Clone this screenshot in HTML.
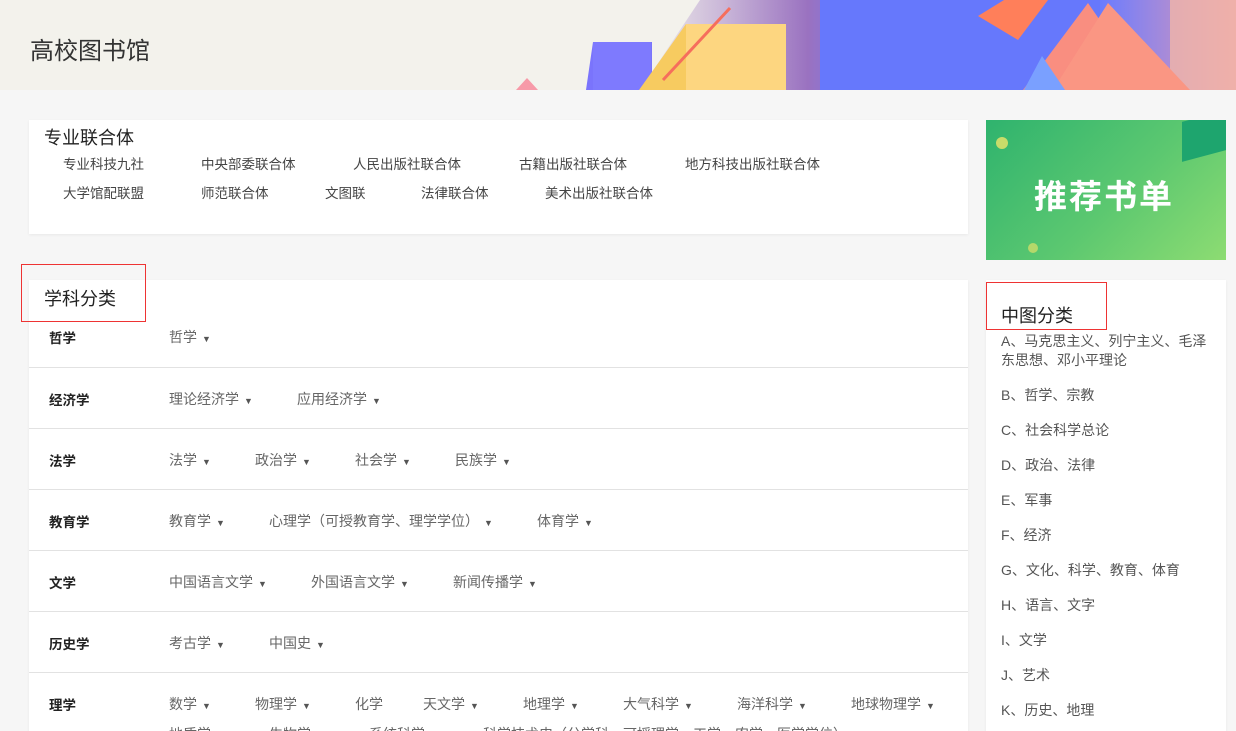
<!DOCTYPE html><html><head><meta charset="utf-8"><style>
*{margin:0;padding:0;box-sizing:border-box}
html,body{width:1236px;height:731px;overflow:hidden}
body{background:#f6f6f6;font-family:"Liberation Sans","Noto Sans CJK SC",sans-serif;position:relative;color:#333}
.hdr{position:absolute;left:0;top:0;width:1236px;height:90px;background:#f3f2ec;overflow:hidden}
.hdr h1{position:absolute;left:30px;top:31px;font-size:24px;font-weight:normal;color:#333}
.ab{position:absolute}
.card{position:absolute;background:#fff;box-shadow:0 1px 3px rgba(0,0,0,.06)}
.lnk{position:absolute;font-size:13.5px;color:#444}
.row{position:absolute;left:0;width:939px;height:61px;border-top:1px solid #e2e2e2}
.row b{position:absolute;left:20px;top:21px;font-size:13.5px;color:#222;font-weight:bold}
.row span{position:absolute;top:21px;font-size:14px;color:#666;white-space:nowrap}
.tri{font-size:9px;color:#555;margin-left:5px;font-style:normal}
.red{position:absolute;border:1px solid #e33}
.cl{position:absolute;left:15px;font-size:14px;color:#555;line-height:19px;width:215px}
</style></head><body>
<div class="hdr">
<svg class="ab" style="left:0;top:0" width="1236" height="90">
<defs>
<linearGradient id="g1" x1="0" x2="1"><stop offset="0" stop-color="#f3f2ec"/><stop offset=".35" stop-color="#c9b6d8"/><stop offset=".7" stop-color="#9a72c0"/><stop offset="1" stop-color="#6a7aff"/></linearGradient>
<linearGradient id="g2" x1="0" x2="1"><stop offset="0" stop-color="#6a7cff"/><stop offset="1" stop-color="#e89ab0"/></linearGradient>
</defs>
<polygon points="700,0 820,0 880,90 640,90" fill="url(#g1)"/>
<rect x="820" y="0" width="300" height="90" fill="#6678fc"/>
<rect x="1100" y="0" width="136" height="90" fill="url(#g2)"/>
<rect x="1170" y="0" width="66" height="90" fill="#f1b5a8" opacity=".8"/>
<polygon points="586,90 593,42 652,42 652,90" fill="#7a74fc"/>
<rect x="593" y="42" width="58" height="48" fill="#7e7afe"/>
<polygon points="639,90 686,24 786,24 786,90" fill="#f7cb60"/>
<rect x="686" y="24" width="100" height="66" fill="#fdd680"/>
<line x1="663" y1="80" x2="730" y2="8" stroke="#f66e5c" stroke-width="3"/>
<polygon points="978,16 1004,0 1048,0 1018,40" fill="#ff7f5a"/>
<polygon points="1023,90 1088,3 1148,90" fill="#f98e80"/>
<polygon points="1053,90 1108,3 1190,90" fill="#fa9683"/>
<polygon points="1024,90 1042,56 1065,90" fill="#7aa0ff"/>
<polygon points="516,90 527,78 538,90" fill="#f79aa8"/>
</svg>
<h1>高校图书馆</h1>
</div>

<div class="card" style="left:29px;top:120px;width:939px;height:114px">
<div class="ab" style="left:15px;top:4px;font-size:18px;color:#222">专业联合体</div>
<div class="lnk" style="left:34px;top:33px">专业科技九社</div>
<div class="lnk" style="left:172px;top:33px">中央部委联合体</div>
<div class="lnk" style="left:324px;top:33px">人民出版社联合体</div>
<div class="lnk" style="left:490px;top:33px">古籍出版社联合体</div>
<div class="lnk" style="left:656px;top:33px">地方科技出版社联合体</div>
<div class="lnk" style="left:34px;top:62px">大学馆配联盟</div>
<div class="lnk" style="left:172px;top:62px">师范联合体</div>
<div class="lnk" style="left:296px;top:62px">文图联</div>
<div class="lnk" style="left:392px;top:62px">法律联合体</div>
<div class="lnk" style="left:516px;top:62px">美术出版社联合体</div>
</div>

<div class="ab" style="left:986px;top:120px;width:240px;height:140px;background:linear-gradient(135deg,#2fb36e,#5cc870 55%,#8ddc72);overflow:hidden">
<div class="ab" style="left:48px;top:50px;font-size:33px;font-weight:bold;color:#fff;letter-spacing:2px">推荐书单</div>
<div class="ab" style="left:196px;top:-4px;width:44px;height:40px;background:#1ea56e;transform:skewY(-15deg)"></div>
<div class="ab" style="left:10px;top:17px;width:12px;height:12px;border-radius:50%;background:#c8dc6a"></div>
<div class="ab" style="left:42px;top:123px;width:10px;height:10px;border-radius:50%;background:#b5d86a"></div>
</div>

<div class="card" style="left:29px;top:280px;width:939px;height:460px;overflow:hidden">
<div class="ab" style="left:15px;top:5px;font-size:18px;color:#222">学科分类</div>
<div class="row" style="top:26px;border-top:none"><b>哲学</b><span style="left:140px">哲学<i class="tri">▼</i></span></div>
<div class="row" style="top:87px"><b>经济学</b><span style="left:140px">理论经济学<i class="tri">▼</i></span><span style="left:268px">应用经济学<i class="tri">▼</i></span></div>
<div class="row" style="top:148px"><b>法学</b><span style="left:140px">法学<i class="tri">▼</i></span><span style="left:226px">政治学<i class="tri">▼</i></span><span style="left:326px">社会学<i class="tri">▼</i></span><span style="left:426px">民族学<i class="tri">▼</i></span></div>
<div class="row" style="top:209px"><b>教育学</b><span style="left:140px">教育学<i class="tri">▼</i></span><span style="left:240px">心理学（可授教育学、理学学位）<i class="tri">▼</i></span><span style="left:508px">体育学<i class="tri">▼</i></span></div>
<div class="row" style="top:270px"><b>文学</b><span style="left:140px">中国语言文学<i class="tri">▼</i></span><span style="left:282px">外国语言文学<i class="tri">▼</i></span><span style="left:424px">新闻传播学<i class="tri">▼</i></span></div>
<div class="row" style="top:331px"><b>历史学</b><span style="left:140px">考古学<i class="tri">▼</i></span><span style="left:240px">中国史<i class="tri">▼</i></span></div>
<div class="row" style="top:392px;height:80px"><b>理学</b><span style="left:140px">数学<i class="tri">▼</i></span><span style="left:226px">物理学<i class="tri">▼</i></span><span style="left:326px">化学</span><span style="left:394px">天文学<i class="tri">▼</i></span><span style="left:494px">地理学<i class="tri">▼</i></span><span style="left:594px">大气科学<i class="tri">▼</i></span><span style="left:708px">海洋科学<i class="tri">▼</i></span><span style="left:822px">地球物理学<i class="tri">▼</i></span>
<span style="left:140px;top:51px">地质学<i class="tri">▼</i></span><span style="left:240px;top:51px">生物学<i class="tri">▼</i></span><span style="left:340px;top:51px">系统科学<i class="tri">▼</i></span><span style="left:454px;top:51px">科学技术史（分学科，可授理学、工学、农学、医学学位）</span></div>
</div>
<div class="red" style="left:21px;top:264px;width:125px;height:58px"></div>

<div class="card" style="left:986px;top:280px;width:240px;height:460px">
<div class="ab" style="left:15px;top:22px;font-size:18px;color:#222">中图分类</div>
<div class="cl" style="top:52px">A、马克思主义、列宁主义、毛泽东思想、邓小平理论</div>
<div class="cl" style="top:106px">B、哲学、宗教</div>
<div class="cl" style="top:141px">C、社会科学总论</div>
<div class="cl" style="top:176px">D、政治、法律</div>
<div class="cl" style="top:211px">E、军事</div>
<div class="cl" style="top:246px">F、经济</div>
<div class="cl" style="top:281px">G、文化、科学、教育、体育</div>
<div class="cl" style="top:316px">H、语言、文字</div>
<div class="cl" style="top:351px">I、文学</div>
<div class="cl" style="top:386px">J、艺术</div>
<div class="cl" style="top:421px">K、历史、地理</div>
</div>
<div class="red" style="left:986px;top:282px;width:121px;height:48px"></div>
</body></html>
